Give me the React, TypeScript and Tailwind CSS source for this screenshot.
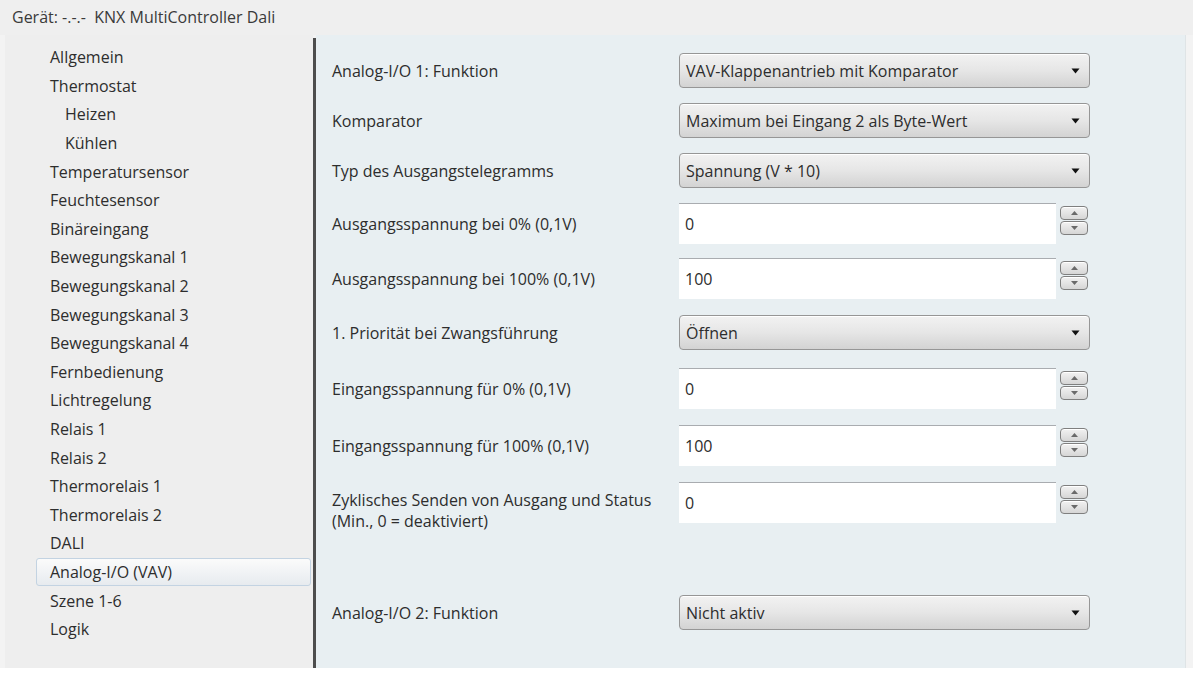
import React from 'react';

const treeItems: { label: string; sub?: boolean; active?: boolean }[] = [
  { label: 'Allgemein' },
  { label: 'Thermostat' },
  { label: 'Heizen', sub: true },
  { label: 'Kühlen', sub: true },
  { label: 'Temperatursensor' },
  { label: 'Feuchtesensor' },
  { label: 'Binäreingang' },
  { label: 'Bewegungskanal 1' },
  { label: 'Bewegungskanal 2' },
  { label: 'Bewegungskanal 3' },
  { label: 'Bewegungskanal 4' },
  { label: 'Fernbedienung' },
  { label: 'Lichtregelung' },
  { label: 'Relais 1' },
  { label: 'Relais 2' },
  { label: 'Thermorelais 1' },
  { label: 'Thermorelais 2' },
  { label: 'DALI' },
  { label: 'Analog-I/O (VAV)', active: true },
  { label: 'Szene 1-6' },
  { label: 'Logik' },
];

type Row = {
  label: string[];
  kind: 'select' | 'number';
  value: string;
  mt: string;
};

const rows: Row[] = [
  { label: ['Analog-I/O 1: Funktion'], kind: 'select', value: 'VAV-Klappenantrieb mit Komparator', mt: 'mt-[18px]' },
  { label: ['Komparator'], kind: 'select', value: 'Maximum bei Eingang 2 als Byte-Wert', mt: 'mt-[15px]' },
  { label: ['Typ des Ausgangstelegramms'], kind: 'select', value: 'Spannung (V * 10)', mt: 'mt-[15px]' },
  { label: ['Ausgangsspannung bei 0% (0,1V)'], kind: 'number', value: '0', mt: 'mt-[15px]' },
  { label: ['Ausgangsspannung bei 100% (0,1V)'], kind: 'number', value: '100', mt: 'mt-[14px]' },
  { label: ['1. Priorität bei Zwangsführung'], kind: 'select', value: 'Öffnen', mt: 'mt-[16px]' },
  { label: ['Eingangsspannung für 0% (0,1V)'], kind: 'number', value: '0', mt: 'mt-[18px]' },
  { label: ['Eingangsspannung für 100% (0,1V)'], kind: 'number', value: '100', mt: 'mt-[16px]' },
  {
    label: ['Zyklisches Senden von Ausgang und Status', '(Min., 0 = deaktiviert)'],
    kind: 'number',
    value: '0',
    mt: 'mt-[16px]',
  },
  { label: ['Analog-I/O 2: Funktion'], kind: 'select', value: 'Nicht aktiv', mt: 'mt-[63px]' },
];

function Select({ value }: { value: string }) {
  return (
    <div className="flex h-[35px] w-[411px] items-center justify-between rounded-[4px] border border-[#969696] bg-gradient-to-b from-[#f2f2f2] via-[#e6e6e6] to-[#d3d3d3] pl-[6px] pr-[9px] shadow-[inset_0_1px_0_#ffffff]">
      <span>{value}</span>
      <svg width="9" height="6" viewBox="0 0 9 6">
        <path d="M0.5 0.5h8L4.5 5.5z" fill="#111" />
      </svg>
    </div>
  );
}

function SpinButton({ up }: { up?: boolean }) {
  return (
    <div className="flex h-[14px] w-[28px] items-center justify-center rounded-[4px] border border-[#7f7f7f] bg-gradient-to-b from-[#f2f2f2] to-[#d6d6d6] shadow-[inset_0_1px_0_#ffffff]">
      <svg width="7" height="4" viewBox="0 0 7 4">
        <path d={up ? 'M0 4h7L3.5 0z' : 'M0 0h7L3.5 4z'} fill="#6a6a6a" />
      </svg>
    </div>
  );
}

function NumberField({ value }: { value: string }) {
  return (
    <div className="flex h-[41px] w-[411px] items-start">
      <div className="flex h-full w-[377px] items-center border-t border-[#a9acb0] bg-white pl-[6px]">
        {value}
      </div>
      <div className="ml-[4px] mt-[3px] flex flex-col gap-[1px]">
        <SpinButton up />
        <SpinButton />
      </div>
    </div>
  );
}

export default function App() {
  return (
    <div
      className="flex h-[673px] w-[1193px] flex-col bg-white text-[16px] text-[#2d2d2d]"
      style={{ fontFamily: '"Open Sans", "Noto Sans", sans-serif' }}
    >
      <div className="flex h-[35px] shrink-0 items-center bg-[#efefef] pl-[12px] pb-[2px] text-[16px] text-[#3a3a3a]">
        <span className="whitespace-pre">Gerät: -.-.-  KNX MultiController Dali</span>
      </div>

      <div className="flex h-[633px] shrink-0 bg-[#f3f3f3]">
        {/* Tree */}
        <div className="ml-[5px] w-[308px] bg-[#eeeeee] pt-[8px]">
          {treeItems.map((item) => (
            <div
              key={item.label}
              className={
                'ml-[31px] mr-[2px] flex h-[28.6px] items-center rounded-[3px] border ' +
                (item.active
                  ? 'border-[#c3d3e2] bg-gradient-to-b from-[#fbfbfb] to-[#e7ebef]'
                  : 'border-transparent')
              }
            >
              <span className={item.sub ? 'pl-[28px]' : 'pl-[13px]'}>{item.label}</span>
            </div>
          ))}
        </div>

        {/* Divider */}
        <div className="mt-[3px] w-[3px] bg-[#4d4d4d]" />

        {/* Parameters */}
        <div className="w-[870px] border-r border-[#dfe4e6] bg-[#e8eff2] pl-[16px]">
          {rows.map((row) => (
            <div key={row.label[0]} className={'flex ' + row.mt}>
              <div
                className={
                  'w-[347px] ' +
                  (row.label.length > 1
                    ? 'pt-[8px] leading-[21px]'
                    : row.kind === 'select'
                      ? 'flex h-[35px] items-center'
                      : 'flex h-[41px] items-center')
                }
              >
                {row.label.length > 1 ? (
                  row.label.map((l) => <div key={l}>{l}</div>)
                ) : (
                  <span>{row.label[0]}</span>
                )}
              </div>
              {row.kind === 'select' ? <Select value={row.value} /> : <NumberField value={row.value} />}
            </div>
          ))}
        </div>
      </div>
    </div>
  );
}
